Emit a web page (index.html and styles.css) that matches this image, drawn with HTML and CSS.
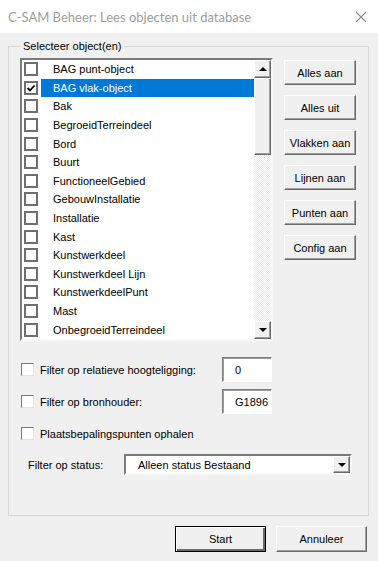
FILE: index.html
```html
<!DOCTYPE html>
<html lang="nl">
<head>
  <meta charset="UTF-8" />
  <meta name="viewport" content="width=device-width, initial-scale=1" />
  <title>C-SAM Beheer</title>
  <link rel="stylesheet" href="styles.css">
</head>
<body>
  <div class="window">
    <div class="titlebar">
      <span class="title">C-SAM Beheer: Lees objecten uit database</span>
      <svg class="close" width="12" height="12" viewBox="0 0 12 12"><path d="M1 1L11 11M11 1L1 11" stroke="#8a8a8a" stroke-width="1.1" fill="none"/></svg>
    </div>

    <div class="content">
      <fieldset class="group">
        <legend>Selecteer object(en)</legend>

        <div class="top">
          <div class="listbox">
            <ul class="items">
              <li><span class="box"></span><span class="name">BAG punt-object</span></li>
              <li class="selected"><span class="box checked"><svg width="10" height="10" viewBox="0 0 10 10"><path d="M1.5 5L4 7.5L8.5 2.5" stroke="#000" stroke-width="1.8" fill="none"/></svg></span><span class="name">BAG vlak-object</span></li>
              <li><span class="box"></span><span class="name">Bak</span></li>
              <li><span class="box"></span><span class="name">BegroeidTerreindeel</span></li>
              <li><span class="box"></span><span class="name">Bord</span></li>
              <li><span class="box"></span><span class="name">Buurt</span></li>
              <li><span class="box"></span><span class="name">FunctioneelGebied</span></li>
              <li><span class="box"></span><span class="name">GebouwInstallatie</span></li>
              <li><span class="box"></span><span class="name">Installatie</span></li>
              <li><span class="box"></span><span class="name">Kast</span></li>
              <li><span class="box"></span><span class="name">Kunstwerkdeel</span></li>
              <li><span class="box"></span><span class="name">Kunstwerkdeel Lijn</span></li>
              <li><span class="box"></span><span class="name">KunstwerkdeelPunt</span></li>
              <li><span class="box"></span><span class="name">Mast</span></li>
              <li><span class="box"></span><span class="name">OnbegroeidTerreindeel</span></li>
            </ul>
            <div class="scrollbar">
              <div class="arrow up"><span class="tri-up"></span></div>
              <div class="thumb"></div>
              <div class="track"></div>
              <div class="arrow down"><span class="tri-down"></span></div>
            </div>
          </div>

          <div class="side-buttons">
            <button class="btn">Alles aan</button>
            <button class="btn">Alles uit</button>
            <button class="btn">Vlakken aan</button>
            <button class="btn">Lijnen aan</button>
            <button class="btn">Punten aan</button>
            <button class="btn">Config aan</button>
          </div>
        </div>

        <div class="filter-row first">
          <span class="check"></span>
          <span class="label">Filter op relatieve hoogteligging:</span>
          <span class="textbox">0</span>
        </div>
        <div class="filter-row second">
          <span class="check"></span>
          <span class="label">Filter op bronhouder:</span>
          <span class="textbox">G1896</span>
        </div>
        <div class="filter-row third">
          <span class="check"></span>
          <span class="label">Plaatsbepalingspunten ophalen</span>
        </div>

        <div class="status-row">
          <span class="status-label">Filter op status:</span>
          <div class="combo">
            <span class="combo-text">Alleen status Bestaand</span>
            <span class="combo-btn"><span class="tri-down"></span></span>
          </div>
        </div>
      </fieldset>

      <div class="footer">
        <button class="btn wide default">Start</button>
        <button class="btn wide">Annuleer</button>
      </div>
    </div>
  </div>
</body>
</html>
```

FILE: styles.css
```css
* {
  box-sizing: border-box;
}
body {
  margin: 0;
  font-family: 'Liberation Sans', Arial, sans-serif;
  font-size: 11px;
  color: #000;
  background-color: #f0f0f0;
}
.window {
  width: 378px;
  height: 561px;
  display: flex;
  flex-direction: column;
  overflow: hidden;
}
.titlebar {
  height: 33px;
  background-color: #fff;
  display: flex;
  align-items: center;
  justify-content: space-between;
  padding: 0 11px 0 8px;
}
.title {
  font-family: Lato, sans-serif;
  font-size: 13px;
  color: #9d9d9d;
}
.content {
  flex: 1;
  background-color: #f0f0f0;
  padding: 6px 0 0 8px;
}
.group {
  margin: 0;
  width: 361px;
  height: 477px;
  border: 1px solid #d5d5d5;
  padding: 5px 0 0 11px;
}
.group legend {
  margin-left: 0;
  padding: 0 3px;
  line-height: 14px;
}
.top {
  display: flex;
  gap: 11px;
}
.listbox {
  width: 253px;
  height: 283px;
  display: flex;
  border: 2px solid;
  border-color: #7a7a7a #f8f8f8 #f8f8f8 #7a7a7a;
  background-color: #fff;
}
.items {
  list-style: none;
  margin: 0;
  padding: 0;
  flex: 1;
}
.items li {
  height: 18.6px;
  display: flex;
  align-items: center;
}
.box {
  width: 14px;
  height: 14px;
  margin-left: 2px;
  margin-right: 3px;
  border: 2px solid #6f6f6f;
  background-color: #fff;
  display: flex;
  align-items: center;
  justify-content: center;
}
.name {
  flex: 1;
  height: 100%;
  display: flex;
  align-items: center;
  padding-left: 12px;
  white-space: nowrap;
}
.selected .name {
  background-color: #0078d7;
  color: #fff;
}
.scrollbar {
  width: 17px;
  display: flex;
  flex-direction: column;
}
.arrow, .thumb {
  background-color: #f0f0f0;
  border: 1px solid;
  border-color: #fff #696969 #696969 #fff;
  box-shadow: inset -1px -1px #a0a0a0;
  display: flex;
  align-items: center;
  justify-content: center;
}
.arrow {
  height: 18px;
}
.thumb {
  height: 77px;
}
.track {
  flex: 1;
  background: repeating-conic-gradient(#ffffff 0 25%, #e9e9e9 0 50%) 0 0 / 2px 2px;
}
.tri-up {
  border-left: 4px solid transparent;
  border-right: 4px solid transparent;
  border-bottom: 4px solid #000;
}
.tri-down {
  border-left: 4px solid transparent;
  border-right: 4px solid transparent;
  border-top: 4px solid #000;
}
.side-buttons {
  display: flex;
  flex-direction: column;
  gap: 10px;
  padding-top: 2px;
}
.btn {
  width: 72px;
  height: 25px;
  padding: 0;
  font-family: inherit;
  font-size: 11px;
  color: #000;
  background-color: #f0f0f0;
  border: 1px solid;
  border-color: #fff #696969 #696969 #fff;
  box-shadow: inset -1px -1px #a0a0a0;
}
.btn.wide {
  width: 91px;
  height: 26px;
}
.btn.default {
  border-color: #000;
  box-shadow: inset 1px 1px #fff, inset -2px -2px #696969;
}
.filter-row {
  display: flex;
  align-items: center;
  height: 25px;
}
.filter-row.first {
  margin-top: 16px;
}
.filter-row.second {
  margin-top: 7px;
}
.filter-row.third {
  height: 13px;
  margin-top: 13px;
}
.check {
  width: 13px;
  height: 13px;
  margin-left: 1px;
  margin-right: 6px;
  background-color: #fff;
  border: 1px solid;
  border-color: #7a7a7a #e3e3e3 #e3e3e3 #7a7a7a;
}
.filter-row .label {
  width: 182px;
}
.textbox {
  width: 50px;
  height: 25px;
  background-color: #fff;
  border: 1px solid;
  border-color: #7a7a7a #fff #fff #7a7a7a;
  box-shadow: inset 1px 1px #a0a0a0;
  display: flex;
  align-items: center;
  padding-left: 12px;
}
.status-row {
  display: flex;
  align-items: center;
  margin-top: 14px;
  padding-left: 8px;
}
.status-label {
  width: 96px;
}
.combo {
  width: 228px;
  height: 21px;
  background-color: #fff;
  border: 2px solid;
  border-color: #7a7a7a #f8f8f8 #f8f8f8 #7a7a7a;
  display: flex;
  align-items: center;
  justify-content: space-between;
  padding-left: 12px;
}
.combo-btn {
  width: 17px;
  height: 17px;
  background-color: #f0f0f0;
  border: 1px solid;
  border-color: #fff #696969 #696969 #fff;
  box-shadow: inset -1px -1px #a0a0a0;
  display: flex;
  align-items: center;
  justify-content: center;
}
.footer {
  display: flex;
  justify-content: flex-end;
  gap: 10px;
  margin-top: 10px;
  padding-right: 11px;
}
```
